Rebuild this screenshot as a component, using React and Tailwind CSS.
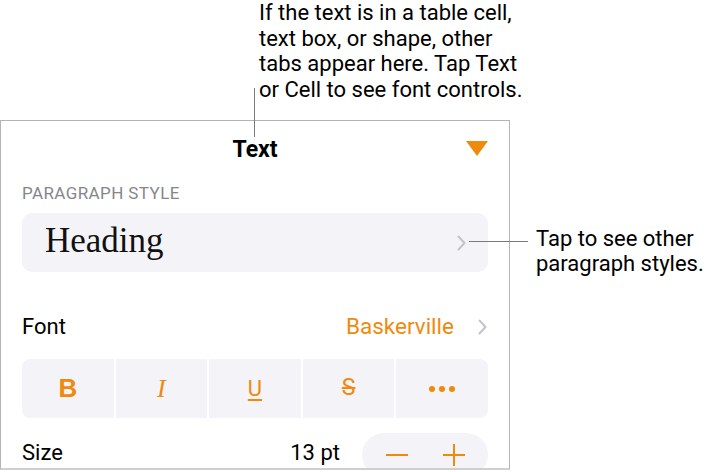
import React from 'react';

const orange = 'text-[#f08a0c]';

function Chevron({ className = '' }) {
  return (
    <svg width="9" height="16" viewBox="0 0 9 16" className={className}>
      <path d="M1.5 1.5 L7.5 8 L1.5 14.5" fill="none" stroke="currentColor" strokeWidth="2" strokeLinecap="round" strokeLinejoin="round" />
    </svg>
  );
}

function Segment({ children, last }) {
  return (
    <div className={`flex-1 flex items-center justify-center bg-[#f4f4f8] ${last ? '' : 'mr-[2px]'}`}>
      {children}
    </div>
  );
}

export default function App() {
  return (
    <div
      className="relative w-[720px] h-[472px] bg-white overflow-hidden text-black"
      style={{ fontFamily: 'Roboto, "Liberation Sans", sans-serif' }}
    >
      {/* top callout */}
      <div className="h-[120px] pl-[259px] text-[22px] leading-[25.5px]">
        <p>If the text is in a table cell,</p>
        <p>text box, or shape, other</p>
        <p>tabs appear here. Tap Text</p>
        <p>or Cell to see font controls.</p>
      </div>

      <div className="flex">
        {/* panel */}
        <div className="w-[510px] h-[350px] border border-[#b4b4b4] border-b-2 border-b-[#cfcfcf] overflow-hidden px-[21px]">
          <div className="relative h-[56px] flex items-center justify-center">
            <span className="text-[23px] font-bold mt-[2px]">Text</span>
            <svg width="22" height="15" viewBox="0 0 22 15" className="absolute right-[0px] top-[20px]">
              <path d="M0 0 H22 L11 15 Z" fill="#f08a0c" />
            </svg>
          </div>

          <div className="text-[17px] tracking-[0.4px] text-[#86868a] leading-[20px] h-[36px] pt-[6px]">PARAGRAPH STYLE</div>

          <div className="h-[59px] rounded-[10px] bg-[#f4f4f8] flex items-center pl-[23px] pr-[22px]">
            <span
              className="flex-1 text-[35px] text-[#111] mt-[-2px]"
              style={{ fontFamily: '"Liberation Serif", "DejaVu Serif", serif' }}
            >
              Heading
            </span>
            <Chevron className="text-[#c4c4c8]" />
          </div>

          <div className="h-[87px] flex items-center pt-[22px] text-[22px]">
            <span className="flex-1">Font</span>
            <span className={`${orange} text-[22.5px] mr-[24px]`}>Baskerville</span>
            <Chevron className="text-[#c4c4c8] mr-[1px]" />
          </div>

          <div className="h-[59px] rounded-[8px] overflow-hidden flex">
            <Segment>
              <span className={`${orange} text-[26px] font-bold`} style={{ fontFamily: '"Liberation Sans", Roboto, sans-serif' }}>B</span>
            </Segment>
            <Segment>
              <span className={`${orange} text-[26px] italic`} style={{ fontFamily: '"Liberation Serif", serif' }}>I</span>
            </Segment>
            <Segment>
              <span className={`${orange} text-[22px] underline decoration-2 underline-offset-[3px]`}>U</span>
            </Segment>
            <Segment>
              <span className={`${orange} text-[23px] line-through decoration-2`}>S</span>
            </Segment>
            <Segment last>
              <span className="flex gap-[4px]">
                <span className="w-[6px] h-[6px] rounded-full bg-[#f08a0c]" />
                <span className="w-[6px] h-[6px] rounded-full bg-[#f08a0c]" />
                <span className="w-[6px] h-[6px] rounded-full bg-[#f08a0c]" />
              </span>
            </Segment>
          </div>

          <div className="flex items-start pt-[15px] text-[22px]">
            <span className="flex-1 pt-[3px]">Size</span>
            <span className="pt-[3px] mr-[22px]">13 pt</span>
            <div className="w-[126px] h-[44px] rounded-full bg-[#f4f4f8] flex items-center justify-around px-[6px]">
              <svg width="22" height="22" viewBox="0 0 22 22">
                <path d="M0 11 H22" stroke="#f08a0c" strokeWidth="2" />
              </svg>
              <svg width="22" height="22" viewBox="0 0 22 22">
                <path d="M0 11 H22 M11 0 V22" stroke="#f08a0c" strokeWidth="2" />
              </svg>
            </div>
          </div>
        </div>

        {/* right callout */}
        <div className="pl-[26px] pt-[106px] text-[22px] leading-[25px]">
          <p>Tap to see other</p>
          <p>paragraph styles.</p>
        </div>
      </div>

      {/* leader lines */}
      <div className="absolute left-[254px] top-[88px] w-[1px] h-[49px] bg-[#7a7a7a]" />
      <div className="absolute left-[469px] top-[241px] w-[59px] h-[1px] bg-[#7a7a7a]" />
    </div>
  );
}
